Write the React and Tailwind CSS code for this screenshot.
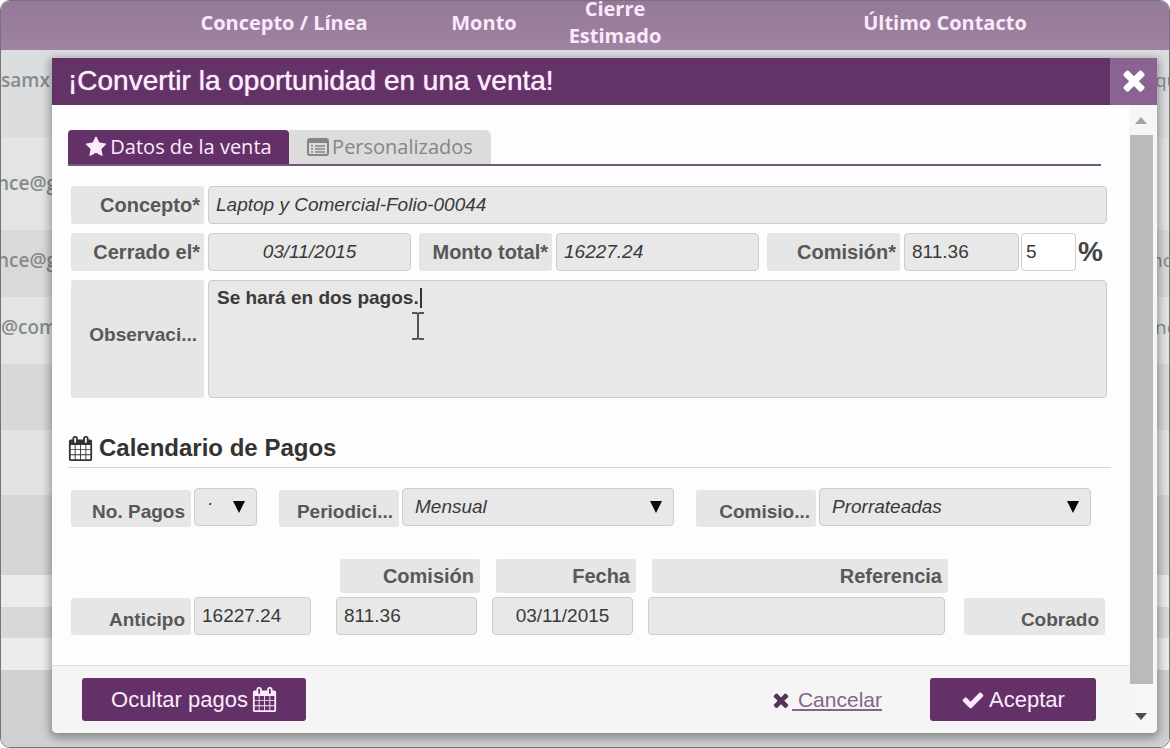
import React from 'react';

const ICONS = {
  calendar:
    'M192 1664h288v-288h-288v288zm352 0h320v-288h-320v288zm-352-352h288v-320h-288v320zm352 0h320v-320h-320v320zm-352-384h288v-288h-288v288zm736 736h320v-288h-320v288zm-384-736h320v-288h-320v288zm768 736h288v-288h-288v288zm-384-352h320v-320h-320v320zm-352-864v-288q0-13-9.5-22.5t-22.5-9.5h-64q-13 0-22.5 9.5t-9.5 22.5v288q0 13 9.5 22.5t22.5 9.5h64q13 0 22.5-9.5t9.5-22.5zm736 864h288v-320h-288v320zm-384-384h320v-288h-320v288zm384 0h288v-288h-288v288zm32-480v-288q0-13-9.5-22.5t-22.5-9.5h-64q-13 0-22.5 9.5t-9.5 22.5v288q0 13 9.5 22.5t22.5 9.5h64q13 0 22.5-9.5t9.5-22.5zm384-64v1280q0 52-38 90t-90 38h-1408q-52 0-90-38t-38-90v-1280q0-52 38-90t90-38h128v-96q0-66 47-113t113-47h64q66 0 113 47t47 113v96h384v-96q0-66 47-113t113-47h64q66 0 113 47t47 113v96h128q52 0 90 38t38 90z',
  times:
    'M1490 1322q0 40-28 68l-136 136q-28 28-68 28t-68-28l-294-294-294 294q-28 28-68 28t-68-28l-136-136q-28-28-28-68t28-68l294-294-294-294q-28-28-28-68t28-68l136-136q28-28 68-28t68 28l294 294 294-294q28-28 68-28t68 28l136 136q28 28 28 68t-28 68l-294 294 294 294q28 28 28 68z',
  check:
    'M1671 566q0 40-28 68l-724 724-136 136q-28 28-68 28t-68-28l-136-136-362-362q-28-28-28-68t28-68l136-136q28-28 68-28t68 28l294 295 656-657q28-28 68-28t68 28l136 136q28 28 28 68z',
  star: 'M1728 647q0 22-26 48l-363 354 86 500q1 7 1 20 0 21-10.5 35.5t-30.5 14.5q-19 0-40-12l-449-236-449 236q-22 12-40 12-21 0-31.5-14.5t-10.5-35.5q0-6 2-20l86-500-364-354q-25-27-25-48 0-37 56-46l502-73 225-455q19-41 49-41t49 41l225 455 502 73q56 9 56 46z',
};

function Icon({ name, className }) {
  return (
    <svg viewBox="0 0 1792 1792" fill="currentColor" aria-hidden="true" className={className}>
      <path d={ICONS[name]} />
    </svg>
  );
}

function ListIcon() {
  return (
    <svg viewBox="0 0 22 18" fill="none" stroke="currentColor" aria-hidden="true" className="h-[18px] w-[22px]">
      <rect x="1" y="1" width="20" height="16" rx="2" strokeWidth="2" />
      <path d="M1 3h20" strokeWidth="4" />
      <path d="M4 8h2M8 8h10M4 11h2M8 11h10M4 14h2M8 14h10" strokeWidth="1.5" />
    </svg>
  );
}

const FIELD =
  'h-[38px] min-w-0 rounded-[4px] border border-[#cccccc] bg-[#e8e8e8] px-[7px] text-[19px] text-[#3a3a3a] outline-none';
const LABEL_BASE =
  'flex shrink-0 items-center justify-end rounded-[3px] bg-[#e6e6e6] font-bold whitespace-nowrap text-[#585858]';
const DATA_LABEL = `${LABEL_BASE} h-[38px] w-[133px] pr-1 text-[20px]`;
const PAY_LABEL = `${LABEL_BASE} mt-[2px] h-[37px] pt-2 pr-[6px] text-[19px]`;
const COLUMN_LABEL = `${LABEL_BASE} ml-1 h-[34px] pr-[6px] text-[20px]`;

function Select({ id, value, className, selectClass }) {
  return (
    <div className={`relative min-w-0 ${className}`}>
      <select id={id} className={`${FIELD} w-full appearance-none pl-3 italic ${selectClass}`} defaultValue={value}>
        <option>{value}</option>
      </select>
      <svg
        viewBox="0 0 12 12"
        aria-hidden="true"
        className="pointer-events-none absolute top-[13px] right-3 h-[12px] w-[12px]"
      >
        <path d="M0 0h12L6 12z" fill="#0a0a0a" />
      </svg>
    </div>
  );
}

const ROWS = [
  { h: 'h-[87px]', bg: 'bg-[#dcdddf]', mail: 'samx', contact: 'qu', pad: 'pt-[17px]' },
  { h: 'h-[93px]', bg: 'bg-[#e3e4e4]', mail: 'nce@g', contact: '', pad: 'pt-[33px] -indent-1' },
  { h: 'h-[67px]', bg: 'bg-[#d9d9d9]', mail: 'nce@g', contact: 'nc', pad: 'pt-[17px] -indent-1' },
  { h: 'h-[67px]', bg: 'bg-[#e3e5e5]', mail: '@com', contact: 'nc', pad: 'pt-[17px]' },
  { h: 'h-[66px]', bg: 'bg-[#d8d8d8]' },
  { h: 'h-[65px]', bg: 'bg-[#e3e3e3]' },
  { h: 'h-[80px]', bg: 'bg-[#d5d5d5]' },
  { h: 'h-[32px]', bg: 'bg-[#ececec]' },
  { h: 'h-[31px]', bg: 'bg-[#d8d8d8]' },
  { h: 'h-[32px]', bg: 'bg-[#ececec]' },
  { h: 'h-[77px]', bg: 'bg-[#d0d0d0]' },
];

function Backdrop() {
  return (
    <table className="w-full table-fixed border-collapse font-['Open_Sans',sans-serif]">
      <thead className="bg-linear-to-b from-[#937a96] to-[#9f83a2] text-[20px] leading-[27px] font-bold text-[#fbe9fb]">
        <tr className="h-[49px]">
          <th className="w-[160px] p-0"></th>
          <th className="w-[246px] p-0 pb-[7px]">Concepto / Línea</th>
          <th className="w-[154px] p-0 pb-[7px]">Monto</th>
          <th className="w-[108px] p-0 pb-[7px]">
            <div className="-my-[6px]">Cierre Estimado</div>
          </th>
          <th className="p-0"></th>
          <th className="w-[420px] p-0 pb-[7px]">Último Contacto</th>
          <th className="w-[14px] p-0"></th>
        </tr>
      </thead>
      <tbody className="text-[19px] leading-[27px] text-[#858a8d]">
        {ROWS.map((row, i) => (
          <tr key={i} className={`${row.h} ${row.bg}`}>
            <td className={`overflow-hidden p-0 align-top font-semibold ${row.pad || ''}`}>{row.mail}</td>
            <td colSpan={5}></td>
            <td className={`overflow-hidden p-0 align-top whitespace-nowrap ${row.pad || ''}`}>{row.contact}</td>
          </tr>
        ))}
      </tbody>
    </table>
  );
}

function Header() {
  return (
    <header className="flex h-[47px] items-center justify-between bg-[#633267] pl-4 text-[#fdeafd]">
      <h1 className="pb-[2px] text-[28px] leading-none whitespace-nowrap [text-shadow:0_0_1px_#fdeafd]">
        ¡Convertir la oportunidad en una venta!
      </h1>
      <button
        type="button"
        aria-label="Cerrar"
        className="grid h-full w-[47px] place-items-center bg-[#8a6392] pb-1 text-white"
      >
        <Icon name="times" className="h-[32px] w-[32px]" />
      </button>
    </header>
  );
}

function Tabs() {
  return (
    <div
      role="tablist"
      className="mr-7 flex border-b-2 border-[#75597a] font-['Open_Sans',sans-serif] text-[20px] font-medium"
    >
      <button
        type="button"
        role="tab"
        aria-selected="true"
        className="flex h-[34px] w-[221px] items-center justify-center gap-[3px] rounded-t-[4px] bg-[#633067] text-[#fdeafd]"
      >
        <Icon name="star" className="h-[22px] w-[22px]" />
        Datos de la venta
      </button>
      <button
        type="button"
        role="tab"
        aria-selected="false"
        className="flex h-[34px] w-[202px] items-center justify-center gap-[3px] rounded-tr-[6px] bg-[#dcdcdc] text-[#858585]"
      >
        <ListIcon />
        Personalizados
      </button>
    </div>
  );
}

function SaleData() {
  return (
    <div className="mt-5 mr-[22px] ml-[3px] flex flex-col gap-[9px]">
      <div className="flex gap-1">
        <label htmlFor="concepto" className={DATA_LABEL}>
          Concepto*
        </label>
        <input id="concepto" className={`${FIELD} flex-1 italic`} defaultValue="Laptop y Comercial-Folio-00044" />
      </div>
      <div className="flex gap-2">
        <div className="flex flex-1 gap-1">
          <label htmlFor="cerrado" className={DATA_LABEL}>
            Cerrado el*
          </label>
          <input id="cerrado" className={`${FIELD} w-0 flex-1 text-center italic`} defaultValue="03/11/2015" />
        </div>
        <div className="flex flex-1 gap-1">
          <label htmlFor="monto" className={DATA_LABEL}>
            Monto total*
          </label>
          <input id="monto" className={`${FIELD} w-0 flex-1 italic`} defaultValue="16227.24" />
        </div>
        <div className="flex flex-1 items-center gap-1">
          <label htmlFor="comision" className={DATA_LABEL}>
            Comisión*
          </label>
          <div className="flex min-w-0 flex-1 items-center gap-[2px]">
            <input id="comision" className={`${FIELD} w-0 flex-1`} defaultValue="811.36" />
            <input
              aria-label="Porcentaje de comisión"
              className="h-[38px] w-[55px] rounded-[4px] border border-[#cccccc] bg-white px-1 text-[19px] text-[#3a3a3a] outline-none"
              defaultValue="5"
            />
            <span className="w-[29px] text-[28px] leading-none font-bold text-[#444444]">%</span>
          </div>
        </div>
      </div>
      <div className="relative flex gap-1">
        <label htmlFor="observaciones" className={`${LABEL_BASE} h-[118px] w-[133px] pr-[7px] pb-2 text-[19px]`}>
          Observaci...
        </label>
        <textarea
          id="observaciones"
          className="h-[118px] min-w-0 flex-1 resize-none rounded-[4px] border border-[#cccccc] bg-[#e8e8e8] px-2 py-1 text-[19px] leading-[26px] font-bold text-[#3a3a3a] outline-none"
          defaultValue="Se hará en dos pagos."
        />
        <span className="absolute top-[8px] left-[349px] h-[20px] w-[2px] bg-[#333333]" />
        <svg
          viewBox="0 0 14 30"
          aria-hidden="true"
          className="absolute top-[31px] left-[340px] h-[30px] w-[14px]"
          fill="none"
          stroke="#555555"
          strokeWidth="2"
        >
          <path d="M1 2h4.500l1.500 1 1.500-1H13M7 3v24M1 28h4.500l1.500-1 1.500 1H13" />
        </svg>
      </div>
    </div>
  );
}

function Payments() {
  return (
    <section>
      <h2 className="mt-[35px] mr-[18px] flex items-center gap-[6px] border-b border-[#d6d6d6] pb-1 text-[24px] leading-[30px] font-bold text-[#333333]">
        <Icon name="calendar" className="h-[25px] w-[25px]" />
        Calendario de Pagos
      </h2>
      <div className="mt-5 mr-[38px] ml-[3px] flex gap-[22px]">
        <div className="flex gap-[3px]">
          <label htmlFor="pagos" className={`${PAY_LABEL} w-[120px]`}>
            No. Pagos
          </label>
          <Select id="pagos" value="·" className="w-[63px]" selectClass="pb-2" />
        </div>
        <div className="flex flex-1 gap-[3px]">
          <label htmlFor="periodicidad" className={`${PAY_LABEL} w-[120px]`}>
            Periodici...
          </label>
          <Select id="periodicidad" value="Mensual" className="flex-1" selectClass="" />
        </div>
        <div className="flex flex-1 gap-[3px]">
          <label htmlFor="comisiones" className={`${PAY_LABEL} w-[120px]`}>
            Comisio...
          </label>
          <Select id="comisiones" value="Prorrateadas" className="flex-1" selectClass="" />
        </div>
      </div>
      <div className="mt-8 mr-[24px] ml-[3px] flex items-end gap-3">
        <div className="mr-[13px] flex items-end gap-[3px]">
          <label htmlFor="anticipo" className={`${PAY_LABEL} w-[120px]`}>
            Anticipo
          </label>
          <input id="anticipo" className={`${FIELD} w-[117px]`} defaultValue="16227.24" />
        </div>
        <div className="flex w-[144px] flex-col gap-1">
          <label htmlFor="p-comision" className={COLUMN_LABEL}>
            Comisión
          </label>
          <input id="p-comision" className={`${FIELD} mr-[3px]`} defaultValue="811.36" />
        </div>
        <div className="flex w-[144px] flex-col gap-1">
          <label htmlFor="p-fecha" className={COLUMN_LABEL}>
            Fecha
          </label>
          <input id="p-fecha" className={`${FIELD} mr-[3px] text-center`} defaultValue="03/11/2015" />
        </div>
        <div className="flex flex-1 flex-col gap-1">
          <label htmlFor="p-referencia" className={COLUMN_LABEL}>
            Referencia
          </label>
          <input id="p-referencia" className={`${FIELD} mr-[3px]`} defaultValue="" />
        </div>
        <div className={`${PAY_LABEL} ml-1 w-[141px]`}>Cobrado</div>
      </div>
    </section>
  );
}

function Footer() {
  const button = 'flex h-[43px] items-center justify-center rounded-[3px] bg-[#633067] text-[#fdeafd]';
  return (
    <footer className="mt-[30px] flex items-center border-t border-[#dedede] bg-[#f5f5f5] py-3 pr-[33px] pl-[30px] text-[22px]">
      <button type="button" className={`${button} w-[224px] gap-1`}>
        Ocultar pagos
        <Icon name="calendar" className="h-[25px] w-[25px]" />
      </button>
      <a href="#cancelar" className="mr-12 ml-auto flex items-center text-[21px] text-[#84658a]">
        <Icon name="times" className="h-[22px] w-[22px] text-[#57315c]" />
        <span className="whitespace-pre underline"> Cancelar</span>
      </a>
      <button type="button" className={`${button} w-[166px] gap-1`}>
        <Icon name="check" className="h-[24px] w-[24px]" />
        Aceptar
      </button>
    </footer>
  );
}

function ScrollTrack() {
  return (
    <div aria-hidden="true" className="flex w-7 shrink-0 flex-col items-center bg-[#f6f6f6] pr-1">
      <div className="grid h-[30px] place-items-center">
        <svg viewBox="0 0 12 7" className="h-[7px] w-[12px]">
          <path d="M0 7h12L6 0z" fill="#a3a3a3" />
        </svg>
      </div>
      <div className="w-[23px] flex-1 bg-[#bababa]" />
      <div className="grid h-[49px] place-items-center pt-4">
        <svg viewBox="0 0 12 7" className="h-[7px] w-[12px]">
          <path d="M0 0h12L6 7z" fill="#4d4d4d" />
        </svg>
      </div>
    </div>
  );
}

export default function App() {
  return (
    <main className="relative overflow-hidden rounded-[10px] border border-[#77737d] font-['Liberation_Sans',Arial,sans-serif]">
      <Backdrop />
      <div
        role="dialog"
        aria-label="Convertir la oportunidad en una venta"
        className="absolute top-[57px] right-[12px] left-[51px] overflow-hidden rounded-b-[5px] bg-[#fdfdfd] shadow-[0_3px_10px_2px_rgba(0,0,0,0.35)]"
      >
        <Header />
        <div className="flex">
          <form className="min-w-0 flex-1" onSubmit={(e) => e.preventDefault()}>
            <div className="pt-[25px] pl-4">
              <Tabs />
              <SaleData />
              <Payments />
            </div>
            <Footer />
          </form>
          <ScrollTrack />
        </div>
      </div>
    </main>
  );
}
